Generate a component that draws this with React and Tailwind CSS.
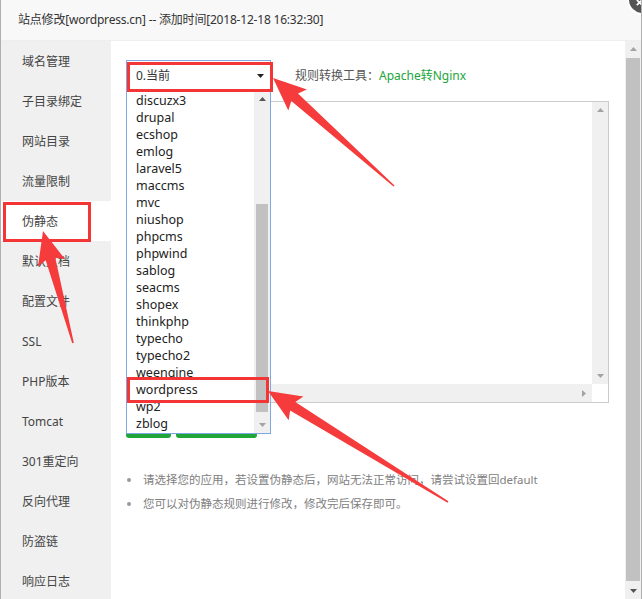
import React from "react";

/* 站点修改 dialog — 伪静态 tab with the rule dropdown open */

const FONT = { fontFamily: '"Noto Sans", "Noto Sans CJK SC", sans-serif' };

const MENU = [
  "域名管理",
  "子目录绑定",
  "网站目录",
  "流量限制",
  "伪静态",
  "默认文档",
  "配置文件",
  "SSL",
  "PHP版本",
  "Tomcat",
  "301重定向",
  "反向代理",
  "防盗链",
  "响应日志",
];

const RULES = [
  "discuzx3", "drupal", "ecshop", "emlog", "laravel5", "maccms", "mvc",
  "niushop", "phpcms", "phpwind", "sablog", "seacms", "shopex", "thinkphp",
  "typecho", "typecho2", "weengine", "wordpress", "wp2", "zblog",
];

function Tri({ dir = "up", color = "#a3a3a3" }) {
  const pts = {
    up: "0,4 3.5,0 7,4",
    down: "0,0 7,0 3.5,4",
    right: "0,0 4,3.5 0,7",
  }[dir];
  const w = dir === "right" ? 4 : 7;
  const h = dir === "right" ? 7 : 4;
  return (
    <svg width={w} height={h} viewBox={`0 0 ${w} ${h}`}>
      <polygon points={pts} fill={color} />
    </svg>
  );
}

// tapered annotation arrow, tail -> tip
function arrowPoints(tx, ty, px, py) {
  const head = 29, wing = 14, neck = 5, tail = 0.8;
  const len = Math.hypot(px - tx, py - ty);
  const ux = (px - tx) / len, uy = (py - ty) / len;
  const nx = -uy, ny = ux;
  const bx = px - ux * head, by = py - uy * head;
  const wx = px - ux * (head + 4), wy = py - uy * (head + 4);
  const p = [
    [tx + nx * tail, ty + ny * tail],
    [bx + nx * neck, by + ny * neck],
    [wx + nx * wing, wy + ny * wing],
    [px, py],
    [wx - nx * wing, wy - ny * wing],
    [bx - nx * neck, by - ny * neck],
    [tx - nx * tail, ty - ny * tail],
  ];
  return p.map(([x, y]) => `${x.toFixed(1)},${y.toFixed(1)}`).join(" ");
}

function Arrows() {
  return (
    <svg className="pointer-events-none absolute left-0 top-0" width="642" height="599">
      <polygon points={arrowPoints(393, 186, 272, 78)} fill="#f53b3b" />
      <polygon points={arrowPoints(72, 343, 42, 231)} fill="#f53b3b" />
      <polygon points={arrowPoints(447, 502, 267, 391)} fill="#f53b3b" />
    </svg>
  );
}

function Sidebar() {
  return (
    <div className="w-[110px] shrink-0 bg-[#f0f0f0]">
      {MENU.map((m) => (
        <div
          key={m}
          className={`flex h-[40px] items-center pl-[21px] pt-[1px] text-[12px] text-[#444] ${
            m === "伪静态" ? "bg-white" : ""
          }`}
        >
          {m}
        </div>
      ))}
    </div>
  );
}

function RuleSelect() {
  return (
    <div className="relative h-[31px] w-[145px] border border-[#7fa7e0] bg-white">
      <div className="flex h-full items-center justify-between pl-[9px] pr-[6px] pt-[1px] text-[12px] text-[#333]">
        <span>0.当前</span>
        <Tri dir="down" color="#222" />
      </div>
      {/* open listbox */}
      <div className="absolute left-[-1px] top-[30px] flex h-[343px] w-[145px] border-x border-b border-[#7fa7e0] bg-white">
        <div className="flex-1 pt-[2px]">
          {RULES.map((r) => (
            <div key={r} className="flex h-[17px] items-center pl-[9px] text-[12.5px] text-[#222]">
              {r}
            </div>
          ))}
        </div>
        <div className="flex w-[16px] flex-col bg-[#f0f0f0]">
          <div className="flex h-[16px] items-center justify-center">
            <Tri dir="up" color="#555" />
          </div>
          <div className="h-[97px]" />
          <div className="mx-[2px] h-[208px] bg-[#c1c1c1]" />
          <div className="flex-1" />
          <div className="flex h-[16px] items-center justify-center">
            <Tri dir="down" />
          </div>
        </div>
      </div>
    </div>
  );
}

function Editor() {
  return (
    <div className="mt-[10px] flex h-[302px] flex-col border border-[#ccc] bg-white">
      <div className="flex flex-1">
        <div className="flex-1" />
        <div className="flex w-[16px] flex-col justify-between bg-[#f0f0f0] py-[6px]">
          <div className="flex justify-center">
            <Tri dir="up" />
          </div>
          <div className="flex justify-center">
            <Tri dir="down" />
          </div>
        </div>
      </div>
      <div className="flex h-[18px]">
        <div className="flex flex-1 items-center justify-end bg-[#f0f0f0] pr-[6px]">
          <Tri dir="right" />
        </div>
        <div className="w-[16px] bg-white" />
      </div>
    </div>
  );
}

function PageScrollbar() {
  return (
    <div className="flex w-[16px] shrink-0 flex-col overflow-hidden bg-[#f0f0f0]">
      <div className="flex h-[17px] items-center justify-center">
        <Tri dir="up" />
      </div>
      <div className="mx-[1px] h-[527px] bg-[#c1c1c1]" />
      <div className="mt-[2px] flex h-[16px] items-center justify-center">
        <Tri dir="down" color="#555" />
      </div>
    </div>
  );
}

export default function App() {
  return (
    <div
      className="relative h-[599px] w-[642px] overflow-hidden border-x border-[#b0b0b0] bg-white"
      style={FONT}
    >
      {/* title bar */}
      <div className="flex h-[41px] items-center border-b border-[#eee] bg-[#f8f8f8] pl-[17px] text-[12px] tracking-[-0.2px] text-[#333]">
        站点修改[wordpress.cn] -- 添加时间[2018-12-18 16:32:30]
      </div>

      <div className="flex h-[558px]">
        <Sidebar />

        <div className="flex-1 pl-[15px] pr-[16px] pt-[19px]">
          <div className="flex items-center">
            <RuleSelect />
            <div className="ml-[24px] pt-[1px] text-[12px] text-[#555]">
              规则转换工具：<span className="text-[#20a53a]">Apache转Nginx</span>
            </div>
          </div>

          <Editor />

          <div className="mt-[8px] flex gap-[5px]">
            <div className="h-[27px] w-[45px] rounded-[3px] bg-[#20a53a]" />
            <div className="h-[27px] w-[81px] rounded-[3px] bg-[#20a53a]" />
          </div>

          <ul className="mt-[30px] text-[11.5px] text-[#808080]">
            <li className="flex h-[24px] items-center">
              <span className="ml-[1px] mr-[12px] h-[4px] w-[4px] rounded-full bg-[#999]" />
              请选择您的应用，若设置伪静态后，网站无法正常访问，请尝试设置回default
            </li>
            <li className="flex h-[24px] items-center">
              <span className="ml-[1px] mr-[12px] h-[4px] w-[4px] rounded-full bg-[#999]" />
              您可以对伪静态规则进行修改，修改完后保存即可。
            </li>
          </ul>
        </div>

        <PageScrollbar />
      </div>

      {/* close button, mostly off-screen */}
      <div className="absolute left-[626px] top-[-16px] flex h-[31px] w-[31px] items-center justify-center rounded-full border-2 border-white bg-[#555]">
        <svg width="31" height="31" viewBox="0 0 31 31">
          <path d="M9 22 L15 16 M9 16 L15 22" stroke="#fff" strokeWidth="2" />
        </svg>
      </div>

      {/* annotation boxes */}
      <div className="pointer-events-none absolute left-[2px] top-[202px] h-[40px] w-[88px] border-[3px] border-[#f43535]" />
      <div className="pointer-events-none absolute left-[126px] top-[62px] h-[30px] w-[146px] border-[3px] border-[#f43535]" />
      <div className="pointer-events-none absolute left-[126px] top-[377px] h-[26px] w-[142px] border-[3px] border-[#f43535]" />

      <Arrows />
    </div>
  );
}
